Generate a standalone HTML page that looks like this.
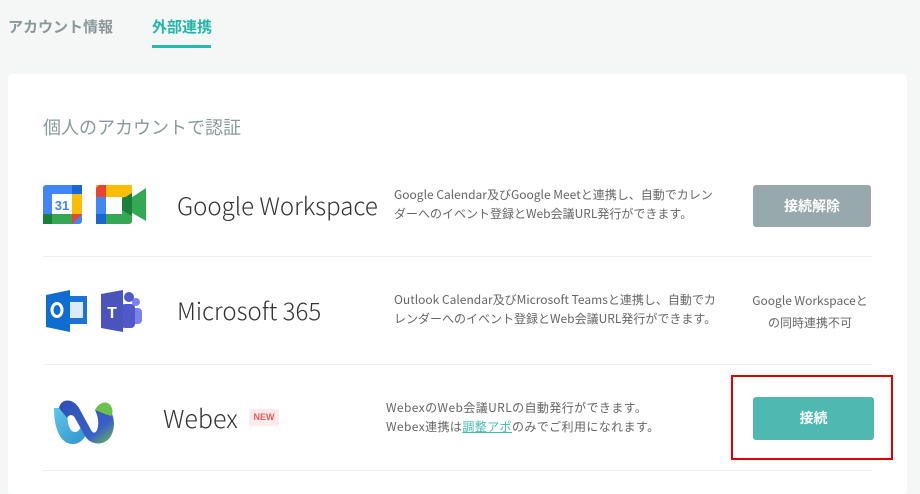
<!DOCTYPE html>
<html><head><meta charset="utf-8"><style>
*{margin:0;padding:0;box-sizing:border-box}
body{width:920px;height:482px;background:#f5f7f7;font-family:"Liberation Sans","Noto Sans CJK JP",sans-serif;position:relative;overflow:hidden}
.abs{position:absolute}
.tab{font-size:15px;font-weight:bold;top:16px}
.card{left:8px;top:74px;width:899px;height:420px;background:#fff;border-radius:4px}
.div{left:43px;width:829px;height:1px;background:#e9eef0}
.name{font-size:24px;color:#333;font-family:"Noto Sans CJK JP","Liberation Sans",sans-serif;font-weight:300}
.desc{font-size:12px;color:#666;line-height:19px;font-family:"Noto Sans CJK JP",sans-serif}
.btn{color:#fff;font-size:14px;font-weight:bold;text-align:center;border-radius:3px}
</style></head><body>
<div class="abs tab" style="left:8px;color:#8a9699">アカウント情報</div>
<div class="abs tab" style="left:152px;color:#1fb5a8">外部連携</div>
<div class="abs" style="left:152px;top:45px;width:59px;height:3px;background:#1fbcb0"></div>
<div class="abs card"></div>
<div class="abs" style="left:43px;top:114px;font-size:18px;color:#8a999d;font-family:'Noto Sans CJK JP',sans-serif">個人のアカウントで認証</div>

<svg class="abs" style="left:43px;top:185px" width="39" height="39" viewBox="0 0 39 39">
<rect x="0" y="0" width="39" height="39" rx="3" fill="#4285f4"/>
<rect x="29" y="0" width="10" height="10" fill="#1967d2"/>
<rect x="29" y="9" width="10" height="20" fill="#fbbc04"/>
<rect x="0" y="29" width="29" height="10" fill="#34a853"/>
<rect x="0" y="29" width="9" height="10" fill="#188038"/>
<polygon points="29,29 39,29 29,39" fill="#ea4335"/>
<rect x="9" y="9" width="20" height="20" fill="#fff"/>
<text x="19" y="25" font-size="13" font-weight="bold" fill="#4285f4" text-anchor="middle" font-family="Liberation Sans">31</text>
</svg>
<svg class="abs" style="left:96px;top:185px" width="50" height="39" viewBox="0 0 50 39">
<rect x="0" y="0" width="36" height="39" rx="3" fill="#34a853"/>
<rect x="0" y="0" width="36" height="12" fill="#fbbc04"/>
<polygon points="0,12 0,3 3,0 10,0 10,12" fill="#ea4335"/>
<rect x="0" y="12" width="10" height="17" fill="#4285f4"/>
<rect x="0" y="29" width="10" height="10" fill="#1967d2"/>
<rect x="10" y="12" width="16" height="17" fill="#fff"/>
<polygon points="26,19 50,3 50,36 26,22" fill="#34a853"/>
<polygon points="26,14 36,8 36,31 26,25" fill="#188038"/>
</svg>
<div class="abs name" style="left:177px;top:187px">Google Workspace</div>
<div class="abs desc" style="left:394px;top:185px">Google Calendar及びGoogle Meetと連携し、自動でカレン<br>ダーへのイベント登録とWeb会議URL発行ができます。</div>
<div class="abs btn" style="left:753px;top:185px;width:118px;height:42px;line-height:42px;background:#98a9ae">接続解除</div>
<div class="abs div" style="top:256px"></div>

<svg class="abs" style="left:46px;top:290px" width="42" height="42" viewBox="0 0 42 42">
<rect x="18" y="6" width="23" height="28" fill="#1a73d6"/>
<g fill="#fff"><rect x="24" y="12" width="13" height="16" opacity=".85"/></g>
<polygon points="0,5 24,0 24,42 0,37" fill="#0f6cd0"/>
<ellipse cx="11" cy="20" rx="5" ry="6.5" fill="none" stroke="#fff" stroke-width="3"/>
</svg>
<svg class="abs" style="left:101px;top:290px" width="42" height="42" viewBox="0 0 42 42">
<circle cx="35" cy="12" r="4" fill="#7b83eb"/>
<rect x="29" y="18" width="12" height="16" rx="4" fill="#7b83eb"/>
<circle cx="28" cy="7" r="5" fill="#5059c9"/>
<rect x="20" y="14" width="14" height="24" rx="4" fill="#5059c9"/>
<polygon points="0,4 22,0 22,42 0,38" fill="#4b53bc"/>
<text x="11" y="28" font-size="16" font-weight="bold" fill="#fff" text-anchor="middle" font-family="Liberation Sans">T</text>
</svg>
<div class="abs name" style="left:177px;top:292px">Microsoft 365</div>
<div class="abs desc" style="left:394px;top:290px">Outlook Calendar及びMicrosoft Teamsと連携し、自動でカ<br>レンダーへのイベント登録とWeb会議URL発行ができます。</div>
<div class="abs desc" style="left:752px;top:290px;width:116px;text-align:center;line-height:22px">Google Workspaceと<br>の同時連携不可</div>
<div class="abs div" style="top:364px"></div>

<svg class="abs" style="left:51px;top:396px" width="70" height="52" viewBox="0 0 70 52">
<defs><linearGradient id="g1" x1="0" y1="0" x2="1" y2="1"><stop offset="0" stop-color="#5ec8e8"/><stop offset="1" stop-color="#2f8fc8"/></linearGradient>
<linearGradient id="g2" x1="0" y1="0" x2="1" y2="1"><stop offset="0" stop-color="#2e4fb8"/><stop offset=".7" stop-color="#3a5fc8"/><stop offset="1" stop-color="#6cc04a"/></linearGradient></defs>
<path d="M3 12 C 3 34, 10 48, 22 48 C 32 48, 36 38, 38 30 L 32 24 C 30 32, 28 36, 24 36 C 18 36, 16 26, 16 12 Z" fill="url(#g1)"/>
<path d="M8 12 C 10 2, 22 2, 28 12 L 40 34 C 42 38, 46 38, 47 30 C 48 24, 46 18, 44 14 L 57 10 C 62 18, 66 28, 60 40 C 54 50, 40 50, 34 40 L 24 22 C 22 18, 18 18, 16 22 Z" fill="url(#g2)"/>
<path d="M44 14 C 48 6, 56 4, 60 10 C 62 14, 62 18, 60 20 L 54 18 Z" fill="#6cc04a"/>
</svg>
<div class="abs name" style="left:163px;top:400px;font-size:25px">Webex</div>
<div class="abs" style="left:249px;top:409px;width:30px;height:17px;background:#fdeaea;color:#e85c5c;font-size:9px;font-weight:bold;text-align:center;line-height:17px;border-radius:2px">NEW</div>
<div class="abs desc" style="left:386px;top:398px;letter-spacing:0.4px">WebexのWeb会議URLの自動発行ができます。<br>Webex連携は<span style="color:#3fbcb0;text-decoration:underline">調整アポ</span>のみでご利用になれます。</div>
<div class="abs" style="left:731px;top:375px;width:162px;height:85px;border:2px solid #e00000"></div>
<div class="abs btn" style="left:753px;top:397px;width:121px;height:43px;line-height:43px;background:#4fb8b1">接続</div>
<div class="abs div" style="top:470px"></div>
</body></html>
